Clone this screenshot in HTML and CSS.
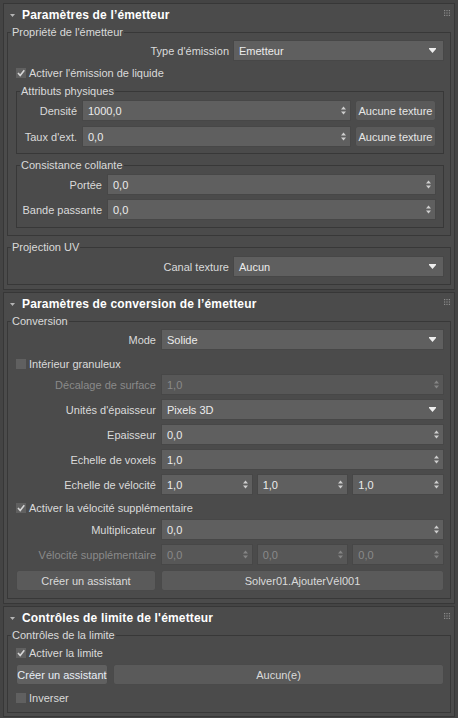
FILE: index.html
```html
<!DOCTYPE html>
<html lang="fr">
<head>
<meta charset="utf-8">
<title>Emetteur</title>
<link rel="stylesheet" href="styles.css">
</head>
<body>
<div class="panel">

  <section class="rollout">
    <div class="rhead">
      <svg class="tri" width="5" height="3" viewBox="0 0 5 3"><polygon points="0,0 5,0 2.5,3"/></svg>
      <span class="rtitle">Paramètres de l’émetteur</span>
      <svg class="grip" width="6" height="6" viewBox="0 0 6 6"><rect x="0" y="0" width="1.2" height="1.2"/><rect x="2.4" y="0" width="1.2" height="1.2"/><rect x="4.8" y="0" width="1.2" height="1.2"/><rect x="0" y="2.4" width="1.2" height="1.2"/><rect x="2.4" y="2.4" width="1.2" height="1.2"/><rect x="4.8" y="2.4" width="1.2" height="1.2"/><rect x="0" y="4.8" width="1.2" height="1.2"/><rect x="2.4" y="4.8" width="1.2" height="1.2"/><rect x="4.8" y="4.8" width="1.2" height="1.2"/></svg>
    </div>
    <div class="rbody">
      <fieldset class="grp">
        <legend>Propriété de l'émetteur</legend>
        <div class="row mt1">
          <span class="lbl w213">Type d'émission</span>
          <div class="dd"><span class="val">Emetteur</span><svg class="ddarrow" width="7" height="5" viewBox="0 0 7 5"><polygon points="0,0 7,0 7,1 3.5,5 0,1"/></svg></div>
        </div>
        <div class="chk mt5"><span class="cb"><svg width="10" height="10" viewBox="0 0 10 10"><polyline points="2,5 4.2,7.5 8.3,2.2"/></svg></span>Activer l'émission de liquide</div>

        <fieldset class="grp sub mt5">
          <legend>Attributs physiques</legend>
          <div class="row mt2">
            <span class="lbl w56">Densité</span>
            <div class="field"><span class="val">1000,0</span><svg class="spin" width="5" height="9" viewBox="0 0 5 9"><polygon points="0,3.5 2.5,0.5 5,3.5"/><polygon points="0,5.5 2.5,8.5 5,5.5"/></svg></div>
            <div class="btn tex">Aucune texture</div>
          </div>
          <div class="row mt5">
            <span class="lbl w56">Taux d'ext.</span>
            <div class="field"><span class="val">0,0</span><svg class="spin" width="5" height="9" viewBox="0 0 5 9"><polygon points="0,3.5 2.5,0.5 5,3.5"/><polygon points="0,5.5 2.5,8.5 5,5.5"/></svg></div>
            <div class="btn tex">Aucune texture</div>
          </div>
        </fieldset>

        <fieldset class="grp sub sub2 mt5">
          <legend>Consistance collante</legend>
          <div class="row mt2">
            <span class="lbl w81">Portée</span>
            <div class="field"><span class="val">0,0</span><svg class="spin" width="5" height="9" viewBox="0 0 5 9"><polygon points="0,3.5 2.5,0.5 5,3.5"/><polygon points="0,5.5 2.5,8.5 5,5.5"/></svg></div>
          </div>
          <div class="row mt4">
            <span class="lbl w81">Bande passante</span>
            <div class="field"><span class="val">0,0</span><svg class="spin" width="5" height="9" viewBox="0 0 5 9"><polygon points="0,3.5 2.5,0.5 5,3.5"/><polygon points="0,5.5 2.5,8.5 5,5.5"/></svg></div>
          </div>
        </fieldset>
      </fieldset>

      <fieldset class="grp mt5">
        <legend>Projection UV</legend>
        <div class="row mt2">
          <span class="lbl w213">Canal texture</span>
          <div class="dd"><span class="val">Aucun</span><svg class="ddarrow" width="7" height="5" viewBox="0 0 7 5"><polygon points="0,0 7,0 7,1 3.5,5 0,1"/></svg></div>
        </div>
      </fieldset>
    </div>
  </section>

  <section class="rollout">
    <div class="rhead">
      <svg class="tri" width="5" height="3" viewBox="0 0 5 3"><polygon points="0,0 5,0 2.5,3"/></svg>
      <span class="rtitle">Paramètres de conversion de l’émetteur</span>
      <svg class="grip" width="6" height="6" viewBox="0 0 6 6"><rect x="0" y="0" width="1.2" height="1.2"/><rect x="2.4" y="0" width="1.2" height="1.2"/><rect x="4.8" y="0" width="1.2" height="1.2"/><rect x="0" y="2.4" width="1.2" height="1.2"/><rect x="2.4" y="2.4" width="1.2" height="1.2"/><rect x="4.8" y="2.4" width="1.2" height="1.2"/><rect x="0" y="4.8" width="1.2" height="1.2"/><rect x="2.4" y="4.8" width="1.2" height="1.2"/><rect x="4.8" y="4.8" width="1.2" height="1.2"/></svg>
    </div>
    <div class="rbody">
      <fieldset class="grp">
        <legend>Conversion</legend>
        <div class="row mt1">
          <span class="lbl w140">Mode</span>
          <div class="dd"><span class="val">Solide</span><svg class="ddarrow" width="7" height="5" viewBox="0 0 7 5"><polygon points="0,0 7,0 7,1 3.5,5 0,1"/></svg></div>
        </div>
        <div class="chk mt7"><span class="cb"></span>Intérieur granuleux</div>
        <div class="row mt3">
          <span class="lbl w140 dis">Décalage de surface</span>
          <div class="field dis"><span class="val">1,0</span><svg class="spin" width="5" height="9" viewBox="0 0 5 9"><polygon points="0,3.5 2.5,0.5 5,3.5"/><polygon points="0,5.5 2.5,8.5 5,5.5"/></svg></div>
        </div>
        <div class="row mt4">
          <span class="lbl w140">Unités d'épaisseur</span>
          <div class="dd"><span class="val">Pixels 3D</span><svg class="ddarrow" width="7" height="5" viewBox="0 0 7 5"><polygon points="0,0 7,0 7,1 3.5,5 0,1"/></svg></div>
        </div>
        <div class="row mt4">
          <span class="lbl w140">Epaisseur</span>
          <div class="field"><span class="val">0,0</span><svg class="spin" width="5" height="9" viewBox="0 0 5 9"><polygon points="0,3.5 2.5,0.5 5,3.5"/><polygon points="0,5.5 2.5,8.5 5,5.5"/></svg></div>
        </div>
        <div class="row mt4">
          <span class="lbl w140">Echelle de voxels</span>
          <div class="field"><span class="val">1,0</span><svg class="spin" width="5" height="9" viewBox="0 0 5 9"><polygon points="0,3.5 2.5,0.5 5,3.5"/><polygon points="0,5.5 2.5,8.5 5,5.5"/></svg></div>
        </div>
        <div class="row mt4">
          <span class="lbl w140">Echelle de vélocité</span>
          <div class="triple">
            <div class="field"><span class="val">1,0</span><svg class="spin" width="5" height="9" viewBox="0 0 5 9"><polygon points="0,3.5 2.5,0.5 5,3.5"/><polygon points="0,5.5 2.5,8.5 5,5.5"/></svg></div>
            <div class="field"><span class="val">1,0</span><svg class="spin" width="5" height="9" viewBox="0 0 5 9"><polygon points="0,3.5 2.5,0.5 5,3.5"/><polygon points="0,5.5 2.5,8.5 5,5.5"/></svg></div>
            <div class="field"><span class="val">1,0</span><svg class="spin" width="5" height="9" viewBox="0 0 5 9"><polygon points="0,3.5 2.5,0.5 5,3.5"/><polygon points="0,5.5 2.5,8.5 5,5.5"/></svg></div>
          </div>
        </div>
        <div class="chk mt6"><span class="cb"><svg width="10" height="10" viewBox="0 0 10 10"><polyline points="2,5 4.2,7.5 8.3,2.2"/></svg></span>Activer la vélocité supplémentaire</div>
        <div class="row mt4">
          <span class="lbl w140">Multiplicateur</span>
          <div class="field"><span class="val">0,0</span><svg class="spin" width="5" height="9" viewBox="0 0 5 9"><polygon points="0,3.5 2.5,0.5 5,3.5"/><polygon points="0,5.5 2.5,8.5 5,5.5"/></svg></div>
        </div>
        <div class="row mt4">
          <span class="lbl w140 dis">Vélocité supplémentaire</span>
          <div class="triple">
            <div class="field dis"><span class="val">0,0</span><svg class="spin" width="5" height="9" viewBox="0 0 5 9"><polygon points="0,3.5 2.5,0.5 5,3.5"/><polygon points="0,5.5 2.5,8.5 5,5.5"/></svg></div>
            <div class="field dis"><span class="val">0,0</span><svg class="spin" width="5" height="9" viewBox="0 0 5 9"><polygon points="0,3.5 2.5,0.5 5,3.5"/><polygon points="0,5.5 2.5,8.5 5,5.5"/></svg></div>
            <div class="field dis"><span class="val">0,0</span><svg class="spin" width="5" height="9" viewBox="0 0 5 9"><polygon points="0,3.5 2.5,0.5 5,3.5"/><polygon points="0,5.5 2.5,8.5 5,5.5"/></svg></div>
          </div>
        </div>
        <div class="row mt5">
          <div class="btn w140b">Créer un assistant</div>
          <div class="btn grow">Solver01.AjouterVél001</div>
        </div>
      </fieldset>
    </div>
  </section>

  <section class="rollout">
    <div class="rhead">
      <svg class="tri" width="5" height="3" viewBox="0 0 5 3"><polygon points="0,0 5,0 2.5,3"/></svg>
      <span class="rtitle">Contrôles de limite de l'émetteur</span>
      <svg class="grip" width="6" height="6" viewBox="0 0 6 6"><rect x="0" y="0" width="1.2" height="1.2"/><rect x="2.4" y="0" width="1.2" height="1.2"/><rect x="4.8" y="0" width="1.2" height="1.2"/><rect x="0" y="2.4" width="1.2" height="1.2"/><rect x="2.4" y="2.4" width="1.2" height="1.2"/><rect x="4.8" y="2.4" width="1.2" height="1.2"/><rect x="0" y="4.8" width="1.2" height="1.2"/><rect x="2.4" y="4.8" width="1.2" height="1.2"/><rect x="4.8" y="4.8" width="1.2" height="1.2"/></svg>
    </div>
    <div class="rbody last">
      <fieldset class="grp lim">
        <legend>Contrôles de la limite</legend>
        <div class="chk mt4"><span class="cb"><svg width="10" height="10" viewBox="0 0 10 10"><polyline points="2,5 4.2,7.5 8.3,2.2"/></svg></span>Activer la limite</div>
        <div class="row mt4">
          <div class="btn w92 hl">Créer un assistant</div>
          <div class="btn grow">Aucun(e)</div>
        </div>
        <div class="chk mt6"><span class="cb"></span>Inverser</div>
      </fieldset>
    </div>
  </section>

</div>
</body>
</html>
```
FILE: styles.css
```css
* { box-sizing: border-box; }

body {
  margin: 0;
  background: #444444;
  font-family: "Liberation Sans", Arial, sans-serif;
  font-size: 11px;
  color: #dadada;
}

.panel {
  padding: 3px 3px 0;
  display: flex;
  flex-direction: column;
  gap: 2px;
}

.rollout {
  border: 1px solid #373737;
  background: #4b4b4b;
}

.rhead {
  height: 22px;
  display: flex;
  align-items: center;
  padding: 0 4px 0 6px;
}

.tri {
  fill: #b4b4b4;
  margin-right: 7px;
  flex: none;
}

.rtitle {
  flex: 1;
  font-weight: bold;
  font-size: 12px;
  letter-spacing: 0.17px;
  color: #ffffff;
  white-space: nowrap;
}

.grip {
  fill: #8c8c8c;
  flex: none;
  margin-top: -4px;
}

.rbody {
  padding: 0 3px 4px;
}

.rbody.last {
  padding-bottom: 3px;
}

fieldset {
  margin: 0;
  min-width: 0;
}

.grp {
  border: 1px solid #383838;
  padding: 0 6px 7px 8px;
}

.grp > legend {
  padding: 0 1px;
  margin-left: -5px;
  height: 13px;
  line-height: 13px;
  color: #dadada;
}

.grp.sub {
  padding: 0 7px 6px 4px;
}

.grp.sub2 {
  padding-bottom: 7px;
}

.grp.sub > legend {
  margin-left: -1px;
}

.grp.lim {
  padding-bottom: 7px;
}

.row {
  display: flex;
  align-items: center;
  gap: 5px;
  height: 21px;
}

.lbl {
  flex: none;
  text-align: right;
  white-space: nowrap;
}

.lbl.dis { color: #8a8a8a; }

.w213 { width: 213px; margin-right: -1px; }
.w56 { width: 56px; }
.w81 { width: 81px; }
.w140 { width: 140px; }

.field,
.dd {
  flex: 1;
  min-width: 0;
  height: 21px;
  display: flex;
  align-items: center;
  background: #5f5f5f;
  border: 1px solid #474747;
  color: #ececec;
  padding: 0 4px 0 5px;
}

.field .val,
.dd .val {
  flex: 1;
  white-space: nowrap;
}

.field.dis {
  background: #575757;
  color: #8a8a8a;
}

.spin {
  fill: #cfcfcf;
  flex: none;
}

.field.dis .spin { fill: #858585; }

.ddarrow {
  fill: #eeeeee;
  flex: none;
  margin-right: 3px;
}

.triple {
  flex: 1;
  display: flex;
  gap: 4px;
  min-width: 0;
}

.btn {
  height: 21px;
  display: flex;
  align-items: center;
  justify-content: center;
  background: #5a5a5a;
  border: 1px solid #4a4a4a;
  border-radius: 3px;
  color: #dadada;
  white-space: nowrap;
}

.btn.tex {
  width: 81px;
  flex: none;
  margin-left: -1px;
  color: #e6e6e6;
}

.btn.grow { flex: 1; }
.btn.w140b { width: 140px; flex: none; }
.btn.w92 { width: 92px; flex: none; }
.btn.hl { background: #606060; color: #e8eef6; }

.chk {
  display: flex;
  align-items: center;
  gap: 3px;
  height: 14px;
  white-space: nowrap;
}

.cb {
  width: 10px;
  height: 10px;
  background: #606060;
  flex: none;
  display: flex;
}

.cb polyline {
  fill: none;
  stroke: #d6d6d6;
  stroke-width: 1.6;
}

.mt1 { margin-top: 1px; }
.mt2 { margin-top: 2px; }
.mt3 { margin-top: 3px; }
.mt4 { margin-top: 4px; }
.mt5 { margin-top: 5px; }
.mt6 { margin-top: 6px; }
.mt7 { margin-top: 7px; }
```
